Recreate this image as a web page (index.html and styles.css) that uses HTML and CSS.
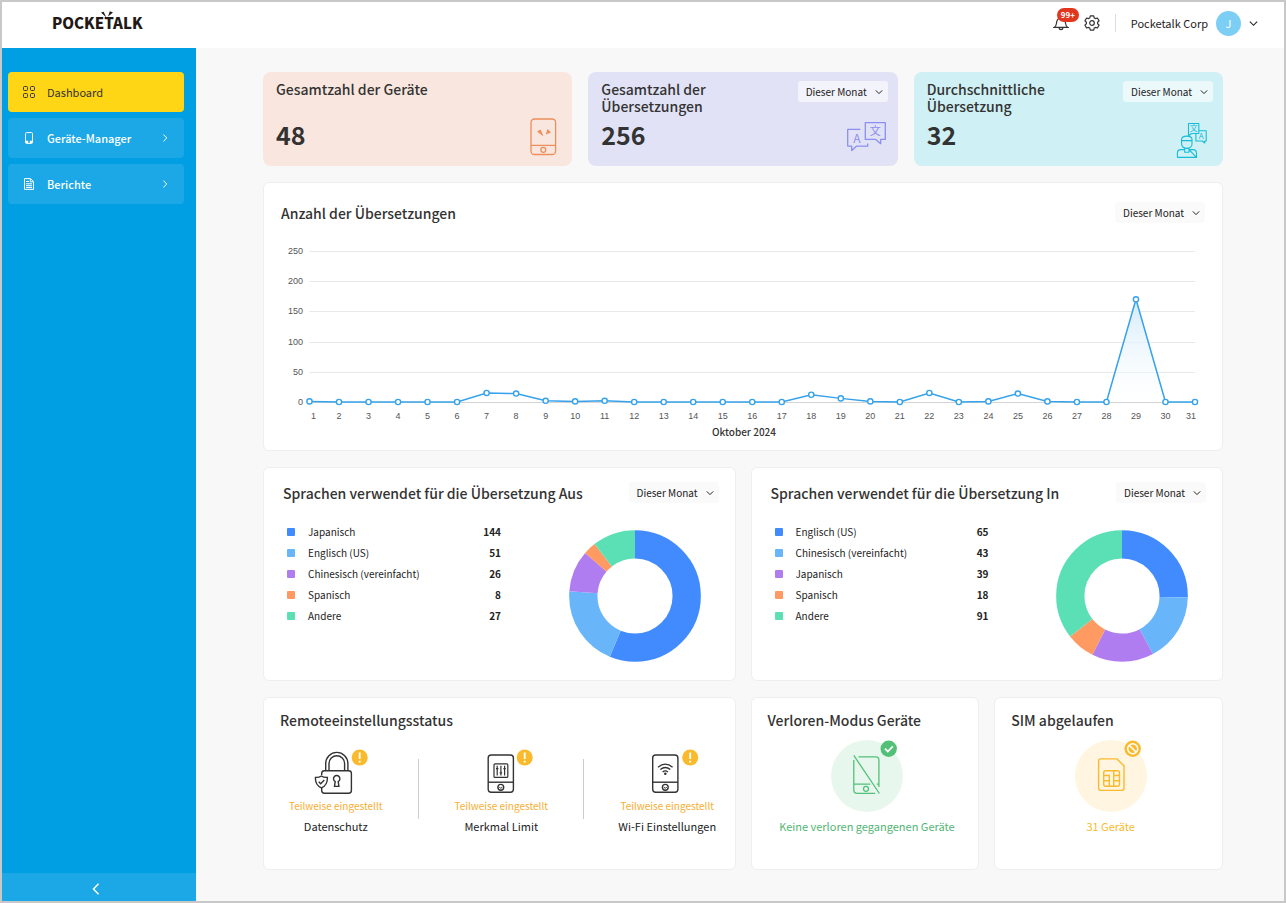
FILE: index.html
```html
<!DOCTYPE html>
<html lang="de">
<head>
<meta charset="utf-8">
<title>Pocketalk Dashboard</title>
<meta name="viewport" content="width=device-width, initial-scale=1">
<link rel="stylesheet" href="styles.css">
</head>
<body>
<svg class="sprite" aria-hidden="true">
  <symbol id="chevron" viewBox="0 0 8 8"><path d="M.8 2.400 4 5.600 7.200 2.400" fill="none" stroke="currentColor"/></symbol>
  <symbol id="chevron-right" viewBox="0 0 8 8"><path d="M2.4.6 5.8 4 2.4 7.4" fill="none" stroke="currentColor"/></symbol>
</svg>
<div class="app">
  <header class="topbar">
    <a class="logo" href="#" aria-label="Pocketalk">POCKETALK
      <svg class="logo-rays" viewBox="0 0 12 7" aria-hidden="true"><path d="M0 1.6 2.6.8 5.4 6.4zM7 5.4 8.8.2 12 1.6z" fill="#231815"/></svg>
    </a>
    <div class="tools">
      <button class="tool" type="button" aria-label="Benachrichtigungen">
        <svg width="16" height="16" viewBox="0 0 16 16" fill="none" stroke="#333" stroke-width="1.2"><path d="M8 2v1.200M1 12.400c1.800-1 2.300-1.900 2.500-4.200C3.700 5 5.300 3.200 8 3.200s4.300 1.800 4.500 5c.2 2.300.7 3.200 2.500 4.200zM6 12.600c.2 2.600 3.800 2.600 4 0"/></svg>
        <span class="count">99+</span>
      </button>
      <button class="tool" type="button" aria-label="Einstellungen">
        <svg width="16" height="16" viewBox="0 0 16 16" fill="none" stroke="#333" stroke-width="1.2" stroke-linejoin="round"><path d="M6.300.9h3.400l.5 2 1.200.7 2-.6 1.700 2.900-1.500 1.400v1.400l1.500 1.400-1.700 2.900-2-.6-1.200.7-.5 2H6.300l-.5-2-1.200-.7-2 .6L.9 10.100l1.500-1.400V7.300L.9 5.900 2.600 3l2 .6 1.200-.7z"/><circle cx="8" cy="8" r="2.300"/></svg>
      </button>
      <button class="account" type="button">
        <span>Pocketalk Corp</span><span class="avatar">J</span>
        <svg width="9" height="9"><use href="#chevron"/></svg>
      </button>
    </div>
  </header>
  <nav class="sidebar">
    <div class="menu">
      <a class="item active" href="#">
        <svg width="12" height="12" viewBox="0 0 12 12" fill="none" stroke="currentColor"><rect x=".5" y=".5" width="4" height="4" rx="1"/><rect x="7.500" y=".5" width="4" height="4" rx="1"/><rect x=".5" y="7.500" width="4" height="4" rx="1"/><rect x="7.500" y="7.500" width="4" height="4" rx="1"/></svg>
        <span>Dashboard</span>
      </a>
      <a class="item" href="#">
        <svg width="12" height="12" viewBox="0 0 12 12" fill="none" stroke="currentColor"><rect x="2.500" y=".6" width="7" height="10.800" rx="1"/><path d="M2.500 9.800h2.700M6.800 9.800h2.700" stroke-width="2.200"/></svg>
        <span>Geräte-Manager</span><svg class="go" width="8" height="8"><use href="#chevron-right"/></svg>
      </a>
      <a class="item" href="#">
        <svg width="12" height="12" viewBox="0 0 12 12" fill="none" stroke="currentColor"><path d="M1.500.6h6l3 3v7.800h-9zM7.300.8v3h3M3 3.500h3M3 5.800h6M3 7.700h6M3 9.600h6"/></svg>
        <span>Berichte</span><svg class="go" width="8" height="8"><use href="#chevron-right"/></svg>
      </a>
    </div>
    <button class="collapse" type="button" aria-label="Menü einklappen">
      <svg width="8" height="12" viewBox="0 0 8 12" fill="none" stroke="#fff" stroke-width="1.500"><path d="M6.500.8 1.500 6l5 5.200"/></svg>
    </button>
  </nav>
  <main class="content">
    <section class="stats">
      <article class="stat peach">
        <div class="stat-text"><h2>Gesamtzahl der Geräte</h2><strong>48</strong></div>
        <div class="stat-side">
          <svg class="stat-icon" viewBox="0 0 40 40" fill="none" stroke="#ee8e5b" stroke-width="1.300"><rect x="11" y="1" width="24.600" height="35.500" rx="3.500"/><path d="M11 27.400h24.600"/><circle cx="23.300" cy="31.800" r="2.500"/><path d="M17 13.500 20.600 11.400 23.500 18.400zM25.800 16.400 27.500 11l3.500 3.400z" fill="#ee8e5b" stroke="none"/></svg>
        </div>
      </article>
      <article class="stat lilac">
        <div class="stat-text"><h2>Gesamtzahl der Übersetzungen</h2><strong>256</strong></div>
        <div class="stat-side">
          <label class="period"><select aria-label="Zeitraum Gesamtzahl"><option>Dieser Monat</option></select><svg><use href="#chevron"/></svg></label>
          <svg class="stat-icon" viewBox="0 0 40 40" fill="none" stroke="#8c8ff0" stroke-width="1.300" stroke-linejoin="round"><path d="M14.300 11.400H1.700v16.700h4v4.500l5-4.500h11v-2.500M19.300 4.600h20v16.800h-4.600v4.300l-5-4.300H19.300z"/><g class="glyph lilac-glyph"><text x="11" y="24.600" font-size="12">A</text><text x="29.300" y="17.300" font-size="11">文</text></g></svg>
        </div>
      </article>
      <article class="stat aqua">
        <div class="stat-text"><h2>Durchschnittliche Übersetzung</h2><strong>32</strong></div>
        <div class="stat-side">
          <label class="period"><select aria-label="Zeitraum Durchschnitt"><option>Dieser Monat</option></select><svg><use href="#chevron"/></svg></label>
          <svg class="stat-icon" viewBox="0 0 40 40" fill="none" stroke="#16bcd9" stroke-width="1.100" stroke-linejoin="round"><path d="M17.500 18V5.500h10.300V15.500H20.500zM28 12.800h7.200v10.200h-1.500v2l-2.400-2h-6.400v-7.300M10.600 21.500c0-4.500 10.400-4.500 10.400 0v4.500c0 5.800-10.400 5.800-10.400 0zM10.600 22.600h10.400M6.400 39.400v-4.200c0-2.400 1.200-3.600 3.600-3.600h3.600M18 31.600h3.900c2.400 0 3.600 1.200 3.600 3.600v4.200zM6.400 39.400h19.100M13.700 29.700v4.500h4.300v-4.500"/><g class="glyph aqua-glyph"><text x="22.700" y="13.400" font-size="8">文</text><text x="30.200" y="21" font-size="8">A</text></g></svg>
        </div>
      </article>
    </section>

    <section class="card trend">
      <div class="card-head"><h2>Anzahl der Übersetzungen</h2>
        <label class="period"><select aria-label="Zeitraum Anzahl"><option>Dieser Monat</option></select><svg><use href="#chevron"/></svg></label></div>
      <svg class="chart" id="chart" viewBox="0 0 924 204" role="img" aria-label="Übersetzungen pro Tag im Oktober 2024">
        <defs><linearGradient id="fade" x1="0" y1="0" x2="0" y2="1"><stop offset="0" stop-color="#d3ebfb"/><stop offset="1" stop-color="#fff" stop-opacity=".3"/></linearGradient></defs>
      </svg>
    </section>

    <section class="grid">
      <article class="card lang">
        <div class="card-head"><h2>Sprachen verwendet für die Übersetzung Aus</h2>
          <label class="period"><select aria-label="Zeitraum Aus"><option>Dieser Monat</option></select><svg><use href="#chevron"/></svg></label></div>
        <div class="lang-body">
          <table class="legend">
            <tr><td><i class="dot c1"></i></td><th scope="row">Japanisch</th><td>144</td></tr>
            <tr><td><i class="dot c2"></i></td><th scope="row">Englisch (US)</th><td>51</td></tr>
            <tr><td><i class="dot c3"></i></td><th scope="row">Chinesisch (vereinfacht)</th><td>26</td></tr>
            <tr><td><i class="dot c4"></i></td><th scope="row">Spanisch</th><td>8</td></tr>
            <tr><td><i class="dot c5"></i></td><th scope="row">Andere</th><td>27</td></tr>
          </table>
          <svg class="donut" viewBox="0 0 132 132" data-values="144,51,26,8,27" aria-hidden="true"></svg>
        </div>
      </article>
      <article class="card lang">
        <div class="card-head"><h2>Sprachen verwendet für die Übersetzung In</h2>
          <label class="period"><select aria-label="Zeitraum In"><option>Dieser Monat</option></select><svg><use href="#chevron"/></svg></label></div>
        <div class="lang-body">
          <table class="legend">
            <tr><td><i class="dot c1"></i></td><th scope="row">Englisch (US)</th><td>65</td></tr>
            <tr><td><i class="dot c2"></i></td><th scope="row">Chinesisch (vereinfacht)</th><td>43</td></tr>
            <tr><td><i class="dot c3"></i></td><th scope="row">Japanisch</th><td>39</td></tr>
            <tr><td><i class="dot c4"></i></td><th scope="row">Spanisch</th><td>18</td></tr>
            <tr><td><i class="dot c5"></i></td><th scope="row">Andere</th><td>91</td></tr>
          </table>
          <svg class="donut" viewBox="0 0 132 132" data-values="65,43,39,18,91" aria-hidden="true"></svg>
        </div>
      </article>

      <article class="card remote">
        <h2>Remoteeinstellungsstatus</h2>
        <div class="remote-body">
          <div class="setting">
            <svg class="setting-icon" viewBox="0 0 72 48" fill="none" stroke="#333" stroke-width="1.400"><path d="M21.700 27v-1.600c0-1.700 1-2.700 2.700-2.700h24.300c1.700 0 2.700 1 2.700 2.700v17.200c0 1.700-1 2.700-2.700 2.700H24.400c-1.700 0-2.700-1-2.700-2.700V40M25.700 22.500V15.500a11.100 11.100 0 0 1 22.200 0v7M29 22.500V15.500a7.800 7.800 0 0 1 15.600 0v7"/><path d="M35.200 33.600a3.200 3.200 0 1 1 3 0l.7 4.800h-4.400z"/><path d="M21.400 28c-1.600 1.200-3.700 1.500-6 1.400-.2 5.500 2 8.800 6 10.500 4-1.700 6.200-5 6-10.500-2.300.1-4.400-.2-6-1.400z" fill="#fff"/><path d="m18.700 33.700 2 2 3.600-3.700"/><circle cx="59.700" cy="9.500" r="8" fill="#f9bb2d" stroke="none"/><path d="M59.700 4.500v6.500M59.700 12.800v1.800" stroke="#fff" stroke-width="1.800"/></svg>
            <span class="status">Teilweise eingestellt</span><span>Datenschutz</span>
          </div>
          <div class="setting">
            <svg class="setting-icon" viewBox="0 0 72 48" fill="none" stroke="#333" stroke-width="1.400"><rect x="23.200" y="7" width="25.200" height="37.200" rx="3"/><path d="M23.200 34.200h25.200"/><circle cx="35.800" cy="39.300" r="2.900"/><path d="M34.300 39.300q1.500 1.800 3 0" stroke-width="1"/><rect x="29" y="15.800" width="13.800" height="13.600" rx="1" stroke-width="1.200"/><path d="M32.200 17.800v9.600M35.900 17.800v9.600M39.600 17.800v9.600M31 20.600h2.400M34.700 24.800h2.400M38.400 20.600h2.400" stroke-width="1.200"/><circle cx="59.700" cy="9.500" r="8" fill="#f9bb2d" stroke="none"/><path d="M59.700 4.500v6.500M59.700 12.800v1.800" stroke="#fff" stroke-width="1.800"/></svg>
            <span class="status">Teilweise eingestellt</span><span>Merkmal Limit</span>
          </div>
          <div class="setting">
            <svg class="setting-icon" viewBox="0 0 72 48" fill="none" stroke="#333" stroke-width="1.400"><rect x="21.700" y="7" width="25.200" height="37.200" rx="3"/><path d="M21.700 34.200h25.200"/><circle cx="34.300" cy="39.300" r="2.900"/><path d="M32.800 39.300q1.500 1.800 3 0" stroke-width="1"/><path d="M27 19.300q7.300-6.300 14.600 0M29.300 21.600q5-4.200 10 0M31.600 24q2.700-2.300 5.400 0" stroke-width="1.300"/><circle cx="34.300" cy="25.800" r="1.300" fill="#333" stroke="none"/><circle cx="59.200" cy="9.500" r="8" fill="#f9bb2d" stroke="none"/><path d="M59.200 4.500v6.500M59.200 12.800v1.800" stroke="#fff" stroke-width="1.800"/></svg>
            <span class="status">Teilweise eingestellt</span><span>Wi-Fi Einstellungen</span>
          </div>
        </div>
      </article>
      <article class="card device">
        <h2>Verloren-Modus Geräte</h2>
        <svg class="round" viewBox="0 0 72 72" fill="none" stroke="#52c177" stroke-width="1.300"><circle cx="36" cy="36" r="36" fill="#e8f7ee" stroke="none"/><path d="M27.500 16.900h17.200c2 0 3.200 1.200 3.200 3.200v27M22.800 20v30c0 2.200 1.200 3.400 3.400 3.400h18M22.800 44.200h16.500M45.800 44.200h2"/><circle cx="35" cy="48.800" r="2.500"/><path d="M22.800 15.400 48.400 53.500"/><circle cx="57.700" cy="8.700" r="8.200" fill="#52c177" stroke="none"/><path d="m54 8.700 2.800 2.800 5-5.200" stroke="#fff" stroke-width="1.800"/></svg>
        <p class="green">Keine verloren gegangenen Geräte</p>
      </article>
      <article class="card device">
        <h2>SIM abgelaufen</h2>
        <svg class="round" viewBox="0 0 72 72" fill="none" stroke="#f9bb2d" stroke-width="1.400"><circle cx="36" cy="36" r="36" fill="#fff5e0" stroke="none"/><path d="M25.500 18.900h16.500l7 7V48c0 1.600-.8 2.400-2.400 2.400H26c-1.600 0-2.400-.8-2.400-2.400V20.900c0-1.300.6-2 1.900-2z"/><rect x="28.700" y="30.700" width="15.800" height="15.600" rx="2"/><path d="M28.700 35.500h5.600v10.800M28.700 40.800h5.600M38.700 30.700v15.600M38.700 35.500h5.800M38.700 40.800h5.800"/><circle cx="57.700" cy="8.700" r="8.200" fill="#f9bb2d" stroke="none"/><circle cx="57.700" cy="8.700" r="5" stroke="#fff" stroke-width="1.500"/><path d="m54.200 5.200 7 7" stroke="#fff" stroke-width="1.500"/></svg>
        <p class="amber">31 Geräte</p>
      </article>
    </section>
  </main>
</div>
<script src="charts.js"></script>
</body>
</html>
```

FILE: styles.css
```css
* { box-sizing: border-box; }
body {
  margin: 0;
  color: #333;
  font-family: "Noto Sans CJK JP", "Noto Sans", sans-serif;
  font-size: 11px;
  line-height: 16px;
}
h2, p { margin: 0; }
h2 { font-size: 14px; line-height: 20px; font-weight: 500; }
button, select { font: inherit; color: inherit; border: 0; background: none; padding: 0; }
a { color: inherit; text-decoration: none; }
.sprite { position: absolute; width: 0; height: 0; }

.app {
  min-height: 100vh;
  border: 2px solid #c8c8c8;
  background: #f8f8f8;
  display: grid;
  grid-template: 46px 1fr / 194px 1fr;
}

.topbar {
  grid-column: 1 / -1;
  background: #fff;
  display: flex;
  justify-content: space-between;
  align-items: center;
  padding: 0 26px 4px 50px;
}
.logo { position: relative; font-size: 15px; line-height: 22px; font-weight: 900; color: #231815; }
.logo-rays { position: absolute; left: 49px; top: -1px; width: 12px; height: 7px; }
.tools { display: flex; align-items: center; gap: 15px; }
.tool { position: relative; display: flex; }
.count {
  position: absolute; left: 4px; top: -7px;
  background: #e2371f; color: #fff;
  border-radius: 8px; padding: 0 4px;
  font-size: 8px; line-height: 14px; font-weight: 700;
}
.account { display: flex; align-items: center; gap: 8px; border-left: 1px solid #ddd; padding-left: 15px; line-height: 18px; color: #222; }
.avatar {
  width: 25px; height: 25px; margin: -4px 0;
  border-radius: 50%; background: #7ccef4; color: #fff;
  line-height: 25px; text-align: center;
}

.sidebar { background: #009fe3; display: flex; flex-direction: column; justify-content: space-between; }
.menu { display: flex; flex-direction: column; gap: 6px; padding: 24px 12px 0 6px; }
.item {
  height: 40px; border-radius: 4px; padding: 0 15px;
  display: flex; align-items: center; gap: 12px;
  background: #1ca7e6; color: #fff; font-weight: 500;
}
.item.active { background: #ffd615; color: #333; font-weight: 400; }
.go { margin-left: auto; }
.collapse { height: 28px; padding: 3px 7px 0 0; background: #1ca7e6; display: flex; justify-content: center; align-items: center; }

.content { padding: 24px 61px 31px 67px; display: flex; flex-direction: column; gap: 16px; min-width: 0; }
.stats { display: grid; grid-template-columns: repeat(3, 1fr); gap: 16px; }
.stat { display: flex; justify-content: space-between; border-radius: 8px; height: 94px; padding: 9px 10px 8px 13px; }
.peach { background: #f9e7df; }
.lilac { background: #e2e2f6; }
.aqua { background: #cff0f4; }
.stat-text { display: flex; flex-direction: column; justify-content: space-between; padding-bottom: 9px; }
.stat-text h2 { line-height: 17px; max-width: 160px; }
.stat-text strong { font-size: 25px; line-height: 30px; }
.stat-side { display: flex; flex-direction: column; justify-content: space-between; align-items: flex-end; }
.stat-icon { width: 40px; height: 40px; margin: auto 2px 0 0; }
.glyph { font-family: "Noto Sans CJK JP", sans-serif; text-anchor: middle; stroke: none; }
.lilac-glyph { fill: #8c8ff0; }
.aqua-glyph { fill: #16bcd9; }

.period {
  display: grid; align-items: center; flex: none;
  border-radius: 3px; background: rgba(255, 255, 255, .6);
  font-size: 10px; line-height: 21px; color: #222;
}
.period select { grid-area: 1 / 1; appearance: none; height: 21px; padding: 0 20px 2px 8px; }
.period svg { grid-area: 1 / 1; justify-self: end; width: 8px; height: 8px; margin-right: 5px; pointer-events: none; }
.card .period { background: #fafafa; }

.card { background: #fff; border: 1px solid #eee; border-radius: 6px; min-width: 0; }
.card-head { display: flex; justify-content: space-between; align-items: center; }
.trend { padding: 19px 17px 0; }
.trend .card-head { height: 21px; }
.chart { display: block; width: 100%; margin-top: 17px; margin-bottom: 6px; }
.chart text { font-family: "Liberation Sans", Arial, sans-serif; font-size: 9px; fill: #555; }
.chart .month { font-family: "Noto Sans CJK JP", sans-serif; font-size: 10px; font-weight: 500; fill: #333; }

.grid { display: grid; grid-template-columns: repeat(4, 1fr); gap: 16px 15px; }
.lang { grid-column: span 2; padding: 14px 16px 18px 19px; }
.lang-body { display: flex; justify-content: space-between; align-items: flex-start; padding: 18px 18px 0 4px; }
.legend { border-collapse: collapse; font-size: 10px; line-height: 21px; color: #222; }
.legend td, .legend th { padding: 0; text-align: left; font-weight: 400; }
.legend td:first-child { width: 21px; }
.legend th { width: 150px; }
.legend td:last-child { width: 43px; text-align: right; font-weight: 700; }
.dot { display: block; width: 8px; height: 8px; border-radius: 1px; }
.c1 { background: #428bff; }
.c2 { background: #69b5fa; }
.c3 { background: #b07df0; }
.c4 { background: #ff9a62; }
.c5 { background: #5be0b5; }
.donut { width: 132px; height: 132px; margin-top: 9px; }

.remote { grid-column: span 2; padding: 12px 0 34px; }
.remote h2 { padding-left: 16px; }
.remote-body { display: grid; grid-template-columns: 155fr 166fr 151fr; margin-top: 18px; }
.setting {
  display: flex; flex-direction: column; align-items: center;
  background: linear-gradient(#ccc, #ccc) right 11px / 1px 60px no-repeat;
}
.setting:first-child { padding-right: 11px; }
.setting:last-child { padding-left: 16px; background: none; }
.setting-icon { width: 72px; height: 48px; }
.status { font-size: 10px; line-height: 20px; color: #f7ae30; margin-bottom: 1px; }
.setting span + span { line-height: 18px; color: #222; }

.device { display: flex; flex-direction: column; padding: 12px 12px 20px 16px; }
.round { align-self: center; width: 72px; height: 72px; margin: 10px 0 5px; overflow: visible; }
.device p { text-align: center; line-height: 18px; white-space: nowrap; }
.green { color: #52b574; }
.amber { color: #f9bb2d; }
```

FILE: charts.js
```js
const NS = "http://www.w3.org/2000/svg";

function draw(parent, tag, attrs, text) {
  const el = document.createElementNS(NS, tag);
  for (const key in attrs) el.setAttribute(key, attrs[key]);
  if (text !== undefined) el.textContent = text;
  parent.appendChild(el);
}

const daily = [1, 0, 0, 0, 0, 0, 15, 14, 2, 1, 2, 0, 0, 0, 0, 0, 0, 12, 6, 1, 0, 15, 0, 1, 14, 1, 0, 0, 170, 0, 0];
const chart = document.getElementById("chart");
const left = 28.5, right = 914, base = 162, unit = 151 / 250;
const x = i => left + i * (right - left) / (daily.length - 1);
const y = v => base - v * unit;

for (let v = 0; v <= 250; v += 50) {
  const row = Math.round(y(v)) + 0.5;
  draw(chart, "path", { d: `M${left} ${row}H${right}`, stroke: v ? "#e8e8e8" : "#d4d4d4" });
  draw(chart, "text", { x: 22, y: row + 2.5, "text-anchor": "end" }, v);
}
const line = daily.map((v, i) => `${x(i)} ${y(v)}`).join("L");
draw(chart, "path", { d: `M${line}L${right} ${base}H${left}Z`, fill: "url(#fade)" });
draw(chart, "path", { d: `M${line}`, fill: "none", stroke: "#36a2eb", "stroke-width": 1.5 });
daily.forEach((v, i) => {
  const inset = i === 0 ? 4 : i === daily.length - 1 ? -4 : 0;
  draw(chart, "circle", { cx: x(i), cy: y(v), r: 2.6, fill: "#fff", stroke: "#36a2eb", "stroke-width": 1.4 });
  draw(chart, "text", { x: x(i) + inset, y: 179, "text-anchor": "middle" }, i + 1);
});
draw(chart, "text", { x: 463, y: 196, "text-anchor": "middle", class: "month" }, "Oktober 2024");

const palette = ["#428bff", "#69b5fa", "#b07df0", "#ff9a62", "#5be0b5"];
document.querySelectorAll(".donut").forEach(svg => {
  const values = svg.dataset.values.split(",").map(Number);
  const total = values.reduce((a, b) => a + b);
  let start = 0;
  values.forEach((v, i) => {
    draw(svg, "circle", {
      cx: 66, cy: 66, r: 51.7, fill: "none", stroke: palette[i], "stroke-width": 28.3,
      pathLength: total, "stroke-dasharray": `${v} ${total - v}`,
      "stroke-dashoffset": -start, transform: "rotate(-90 66 66)"
    });
    start += v;
  });
});
```
